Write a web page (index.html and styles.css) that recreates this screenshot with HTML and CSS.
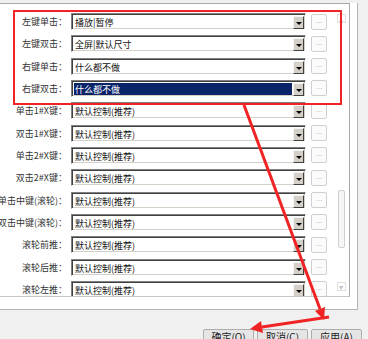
FILE: index.html
```html
<!DOCTYPE html>
<html lang="zh-CN">

<head>
    <meta charset="UTF-8">
    <title>鼠标设置</title>
    <link rel="stylesheet" href="styles.css">
</head>

<body>
    <div class="dialog">
        <div class="tab-page">
            <div class="list-box">
                <div class="rows">
                    <div class="row">
                        <div class="label"><span>左键单击：</span></div>
                        <div class="combo"><span class="value">播放|暂停</span><span class="drop"></span></div>
                        <button class="more">...</button>
                    </div>
                    <div class="row">
                        <div class="label"><span>左键双击：</span></div>
                        <div class="combo"><span class="value">全屏|默认尺寸</span><span class="drop"></span></div>
                        <button class="more">...</button>
                    </div>
                    <div class="row">
                        <div class="label"><span>右键单击：</span></div>
                        <div class="combo"><span class="value">什么都不做</span><span class="drop"></span></div>
                        <button class="more">...</button>
                    </div>
                    <div class="row">
                        <div class="label"><span>右键双击：</span></div>
                        <div class="combo focused"><span class="value">什么都不做</span><span class="drop"></span></div>
                        <button class="more">...</button>
                    </div>
                    <div class="row">
                        <div class="label"><span>单击1#X键：</span></div>
                        <div class="combo"><span class="value">默认控制(推荐)</span><span class="drop"></span></div>
                        <button class="more">...</button>
                    </div>
                    <div class="row">
                        <div class="label"><span>双击1#X键：</span></div>
                        <div class="combo"><span class="value">默认控制(推荐)</span><span class="drop"></span></div>
                        <button class="more">...</button>
                    </div>
                    <div class="row">
                        <div class="label"><span>单击2#X键：</span></div>
                        <div class="combo"><span class="value">默认控制(推荐)</span><span class="drop"></span></div>
                        <button class="more">...</button>
                    </div>
                    <div class="row">
                        <div class="label"><span>双击2#X键：</span></div>
                        <div class="combo"><span class="value">默认控制(推荐)</span><span class="drop"></span></div>
                        <button class="more">...</button>
                    </div>
                    <div class="row">
                        <div class="label"><span>单击中键(滚轮)：</span></div>
                        <div class="combo"><span class="value">默认控制(推荐)</span><span class="drop"></span></div>
                        <button class="more">...</button>
                    </div>
                    <div class="row">
                        <div class="label"><span>双击中键(滚轮)：</span></div>
                        <div class="combo"><span class="value">默认控制(推荐)</span><span class="drop"></span></div>
                        <button class="more">...</button>
                    </div>
                    <div class="row">
                        <div class="label"><span>滚轮前推：</span></div>
                        <div class="combo"><span class="value">默认控制(推荐)</span><span class="drop"></span></div>
                        <button class="more">...</button>
                    </div>
                    <div class="row">
                        <div class="label"><span>滚轮后推：</span></div>
                        <div class="combo"><span class="value">默认控制(推荐)</span><span class="drop"></span></div>
                        <button class="more">...</button>
                    </div>
                    <div class="row">
                        <div class="label"><span>滚轮左推：</span></div>
                        <div class="combo"><span class="value">默认控制(推荐)</span><span class="drop"></span></div>
                        <button class="more">...</button>
                    </div>
                </div>
                <div class="scrollbar">
                    <span class="arrow">▴</span>
                    <span class="track"><span class="thumb"></span></span>
                    <span class="arrow">▾</span>
                </div>
            </div>
        </div>

        <div class="buttons">
            <button class="btn">确定(O)</button>
            <button class="btn">取消(C)</button>
            <button class="btn">应用(A)</button>
        </div>

        <!-- annotation drawn over the screenshot -->
        <div class="highlight"></div>
        <svg class="arrows" width="368" height="339" viewBox="0 0 368 339">
            <line x1="244" y1="105" x2="320" y2="309" />
            <polygon points="324,320 325,307 315,311" />
            <line x1="329" y1="317" x2="262" y2="327" />
            <polygon points="250,329 263,333 261,321" />
        </svg>
    </div>
</body>

</html>
```

FILE: styles.css
```css
body {
    margin: 0;
    font-family: "Noto Sans CJK SC", "Liberation Sans", sans-serif;
    font-size: 9px;
    color: #222;
}

.dialog {
    position: relative;
    width: 368px;
    height: 339px;
    overflow: hidden;
    background-color: #f0f0f0;
}

.tab-page {
    height: 306px;
    width: 357px;
    background-color: #fff;
    border-right: 1px solid #b5b5b5;
    border-bottom: 1px solid #b5b5b5;
}

.list-box {
    display: flex;
    height: 292px;
    width: 349px;
    margin-top: 3px;
    border-top: 1px solid #a8a8a8;
    border-right: 1px solid #a8a8a8;
    border-bottom: 1px solid #c8c8c8;
    overflow: hidden;
}

.rows {
    flex: 1;
    padding-top: 9px;
}

.row {
    display: flex;
    align-items: center;
    height: 17px;
    margin-bottom: 5.33px;
}

.label {
    display: flex;
    justify-content: flex-end;
    width: 67px;
    flex-shrink: 0;
    white-space: nowrap;
    color: #333;
}

.combo {
    display: flex;
    width: 235px;
    height: 17px;
    margin-left: 4px;
    box-sizing: border-box;
    border-top: 1px solid #808080;
    border-left: 1px solid #808080;
    border-right: 1px solid #fff;
    border-bottom: 1px solid #fff;
    box-shadow: inset 1px 1px 0 #404040, inset -1px -1px 0 #d4d0c8;
    background-color: #fff;
    padding: 2px 1px 1px 2px;
}

.value {
    flex: 1;
    line-height: 13px;
    padding-left: 1px;
    color: #111;
}

.focused .value {
    background-color: #0a246a;
    color: #fff;
    margin-right: 1px;
}

.drop {
    position: relative;
    width: 11px;
    height: 13px;
    box-sizing: border-box;
    background-color: #d4d0c8;
    border-top: 1px solid #f4f4f4;
    border-left: 1px solid #f4f4f4;
    border-right: 1px solid #404040;
    border-bottom: 1px solid #404040;
}

.drop::after {
    content: '';
    position: absolute;
    left: 2px;
    top: 5px;
    border-left: 3px solid transparent;
    border-right: 3px solid transparent;
    border-top: 3px solid #000;
}

.more {
    width: 16px;
    height: 16px;
    margin-left: 5px;
    padding: 0 0 4px;
    border: 1px solid #cfcfcf;
    border-radius: 2px;
    background-color: #fbfbfb;
    color: #b0b0b0;
    font-size: 8px;
    line-height: 8px;
    font-family: "Liberation Sans", sans-serif;
    display: flex;
    align-items: flex-end;
    justify-content: center;
}

.scrollbar {
    display: flex;
    flex-direction: column;
    align-items: center;
    width: 12px;
    margin-right: 2px;
    padding: 10px 0 5px;
    color: #c0c0c0;
    font-size: 8px;
    line-height: 9px;
}

.track {
    flex: 1;
    width: 7px;
    display: flex;
    flex-direction: column;
    justify-content: flex-end;
}

.thumb {
    height: 56px;
    margin-bottom: 34px;
    border: 1px solid #d0d0d0;
    border-radius: 2px;
    background-color: #f6f6f6;
}

.arrow {
    display: block;
    width: 7px;
    height: 7px;
    border: 1px solid #dedede;
    text-align: center;
    line-height: 7px;
}

.buttons {
    display: flex;
    justify-content: flex-end;
    gap: 3px;
    padding: 19px 6px 0 0;
}

.btn {
    display: flex;
    justify-content: center;
    align-items: flex-start;
    width: 51px;
    height: 22px;
    padding: 1px 0 0;
    border: 1px solid #adadad;
    border-radius: 2px;
    background-color: #e5e5e5;
    font-family: "Noto Sans CJK SC", "Liberation Sans", sans-serif;
    font-size: 10px;
    line-height: 12px;
    color: #222;
}

.highlight {
    position: absolute;
    left: 13px;
    top: 10px;
    width: 325px;
    height: 91px;
    border: 2px solid #f02424;
}

.arrows {
    position: absolute;
    left: 0;
    top: 0;
}

.arrows line {
    stroke: #f02424;
    stroke-width: 3;
}

.arrows polygon {
    fill: #f02424;
}
```
